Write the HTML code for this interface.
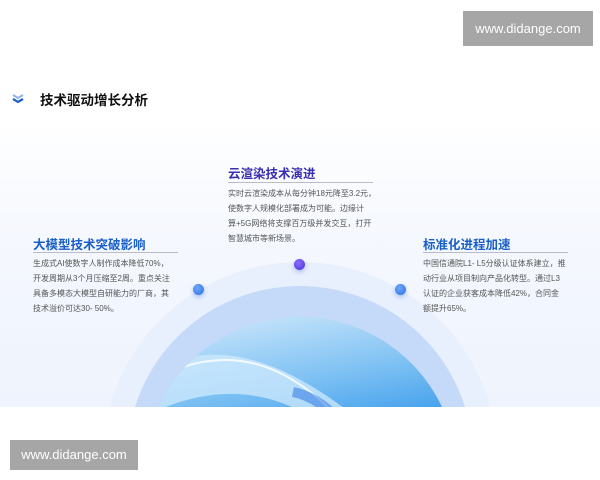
<!DOCTYPE html>
<html><head><meta charset="utf-8"><style>
html,body{margin:0;width:600px;height:480px;overflow:hidden}
body{position:relative;background:#fff;font-family:"Liberation Sans","Noto Sans CJK SC",sans-serif}
.bg{position:absolute;left:0;top:120px;width:600px;height:287px;background:linear-gradient(180deg,#fff 0%,#f5f8fe 40%,#eef3fd 100%);overflow:hidden}
.c{position:absolute;border-radius:50%}
.t{position:absolute;font-size:12.5px;font-weight:bold;white-space:nowrap}
.u{position:absolute;height:1px;background:#b8bcc8}
.p{position:absolute;font-size:8px;line-height:15px;color:#555;white-space:nowrap}
.d{position:absolute;width:11px;height:11px;border-radius:50%;background:radial-gradient(circle at 40% 35%,#6ea9ff,#2a6fe0);box-shadow:0 2px 4px rgba(40,100,220,.35)}
.wm{position:absolute;background:#a6a6a6;color:#fff;font-size:13px;text-align:center}
</style></head><body>
<div class="bg">
 <div class="c" style="left:103px;top:142px;width:394px;height:394px;background:#e8effd"></div>
 <div class="c" style="left:127px;top:166px;width:346px;height:346px;background:#c5d9f8"></div>
 <div class="c" style="left:143px;top:197px;width:314px;height:314px;background:linear-gradient(170deg,#d6ecfc 0%,#7cc0f3 25%,#2f95ea 45%,#5fb2f0 65%,#2a86e6 100%);overflow:hidden">
  <svg width="314" height="314" style="position:absolute;left:0;top:0"><path d="M0 60 C60 20 120 40 170 70 C220 100 250 140 314 150 L314 200 C240 180 210 120 160 95 C110 70 60 70 0 100Z" fill="#cfeafd" opacity=".75"/><path d="M40 50 C100 30 150 55 190 95 C220 125 240 165 270 200" stroke="#fff" stroke-width="2" fill="none" opacity=".8"/><path d="M150 75 C200 85 230 150 250 200" stroke="#1f6fe0" stroke-width="10" fill="none" opacity=".5"/></svg>
 </div>
</div>
<svg style="position:absolute;left:12px;top:92px" width="12" height="12"><path d="M1 3 L6 6 L11 3" stroke="#8fb3ea" stroke-width="2" fill="none"/><path d="M1 7 L6 10 L11 7" stroke="#1f5fc8" stroke-width="2.2" fill="none"/></svg>
<div class="t" style="left:40px;top:89px;color:#111;font-size:13.5px">技术驱动增长分析</div>

<div class="t" style="left:228px;top:163px;color:#3a2fb0">云渲染技术演进</div>
<div class="u" style="left:228px;top:182px;width:145px"></div>
<div class="p" style="left:228px;top:186px">实时云渲染成本从每分钟18元降至3.2元，<br>使数字人规模化部署成为可能。边缘计<br>算+5G网络将支撑百万级并发交互，打开<br>智慧城市等新场景。</div>

<div class="t" style="left:33px;top:234px;color:#1a5fc8">大模型技术突破影响</div>
<div class="u" style="left:33px;top:252px;width:145px"></div>
<div class="p" style="left:33px;top:256px">生成式AI使数字人制作成本降低70%，<br>开发周期从3个月压缩至2周。重点关注<br>具备多模态大模型自研能力的厂商，其<br>技术溢价可达30- 50%。</div>

<div class="t" style="left:423px;top:234px;color:#1a5fc8">标准化进程加速</div>
<div class="u" style="left:423px;top:252px;width:145px"></div>
<div class="p" style="left:423px;top:256px">中国信通院L1- L5分级认证体系建立，推<br>动行业从项目制向产品化转型。通过L3<br>认证的企业获客成本降低42%，合同金<br>额提升65%。</div>

<div class="d" style="left:193px;top:284px"></div>
<div class="d" style="left:294px;top:259px;background:radial-gradient(circle at 40% 35%,#8a6cff,#4a2fd8)"></div>
<div class="d" style="left:395px;top:284px"></div>

<div class="wm" style="left:463px;top:11px;width:130px;height:35px;line-height:35px">www.didange.com</div>
<div class="wm" style="left:10px;top:440px;width:128px;height:30px;line-height:30px">www.didange.com</div>
</body></html>
